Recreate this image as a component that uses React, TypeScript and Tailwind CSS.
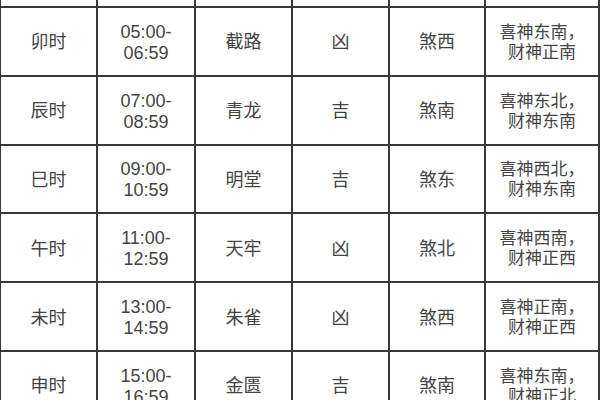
const rows = [
  { name: "卯时", time: ["05:00-", "06:59"], god: "截路", luck: "凶", sha: "煞西", dir: ["喜神东南，", "财神正南"] },
  { name: "辰时", time: ["07:00-", "08:59"], god: "青龙", luck: "吉", sha: "煞南", dir: ["喜神东北，", "财神东南"] },
  { name: "巳时", time: ["09:00-", "10:59"], god: "明堂", luck: "吉", sha: "煞东", dir: ["喜神西北，", "财神东南"] },
  { name: "午时", time: ["11:00-", "12:59"], god: "天牢", luck: "凶", sha: "煞北", dir: ["喜神西南，", "财神正西"] },
  { name: "未时", time: ["13:00-", "14:59"], god: "朱雀", luck: "凶", sha: "煞西", dir: ["喜神正南，", "财神正西"] },
  { name: "申时", time: ["15:00-", "16:59"], god: "金匮", luck: "吉", sha: "煞南", dir: ["喜神东南，", "财神正北"] },
];

function Cell({ children }: { children?: React.ReactNode }) {
  return (
    <div className="bg-white h-[66.8px] pt-[3px] flex flex-col items-center justify-center text-center leading-[21px]">
      {children}
    </div>
  );
}

export default function App() {
  return (
    <div className="w-[600px] h-[400px] overflow-hidden bg-white">
      <div
        className="-mt-[60.8px] grid grid-cols-[95px_96px_95px_95px_94px_112px] gap-[2px] bg-[#383838] pl-[1px] pr-[2px] text-[18px] text-[#444]"
        style={{ fontFamily: '"Liberation Sans", "Noto Sans CJK SC", sans-serif' }}
      >
        {/* row above the visible area, only its bottom border shows */}
        <Cell />
        <Cell />
        <Cell />
        <Cell />
        <Cell />
        <Cell />
        {rows.map((r) => (
          <div key={r.name} className="contents">
            <Cell>{r.name}</Cell>
            <Cell>
              <span>{r.time[0]}</span>
              <span>{r.time[1]}</span>
            </Cell>
            <Cell>{r.god}</Cell>
            <Cell>{r.luck}</Cell>
            <Cell>{r.sha}</Cell>
            <Cell>
              <span className="text-[17px] leading-[20px]">{r.dir[0]}</span>
              <span className="text-[17px] leading-[20px]">{r.dir[1]}</span>
            </Cell>
          </div>
        ))}
      </div>
    </div>
  );
}
